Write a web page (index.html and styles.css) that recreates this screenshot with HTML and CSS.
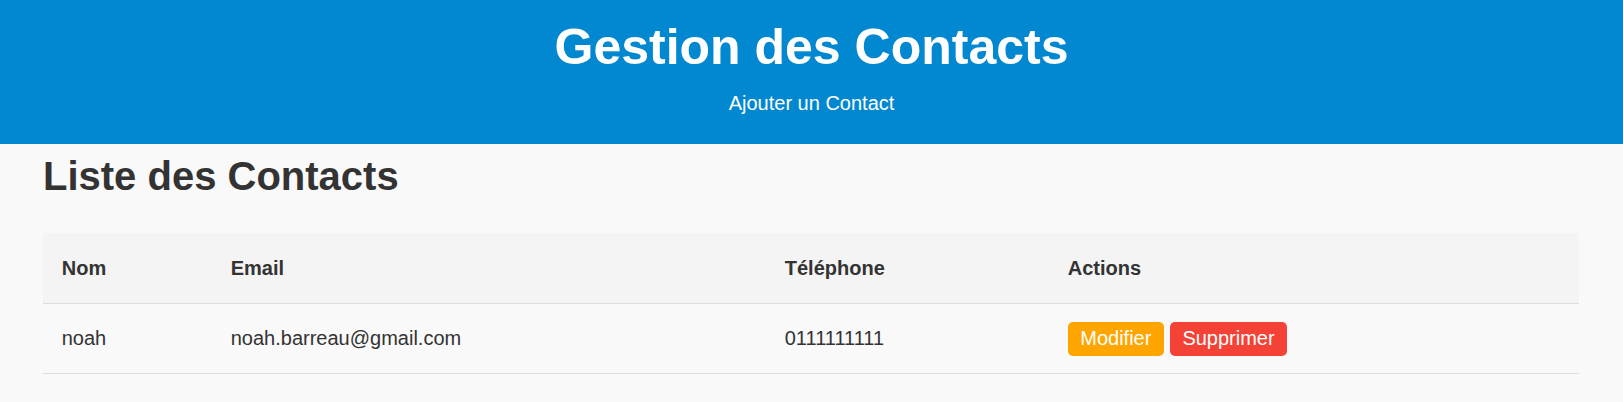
FILE: index.html
```html
<!DOCTYPE html>
<html lang="fr">
<head>
<meta charset="utf-8">
<title>Gestion des Contacts</title>
<link rel="stylesheet" href="styles.css">
</head>
<body>
<header class="site-header">
  <h1 class="site-title">Gestion des Contacts</h1>
  <nav class="site-nav"><a class="nav-link" href="#">Ajouter un Contact</a></nav>
</header>
<main class="content">
  <h2 class="section-title">Liste des Contacts</h2>
  <table class="contacts">
    <thead>
      <tr>
        <th class="col-nom">Nom</th>
        <th class="col-email">Email</th>
        <th class="col-tel">Téléphone</th>
        <th class="col-actions">Actions</th>
      </tr>
    </thead>
    <tbody>
      <tr>
        <td>noah</td>
        <td>noah.barreau@gmail.com</td>
        <td>0111111111</td>
        <td class="actions-cell">
          <div class="actions">
            <a class="btn btn-edit" href="#">Modifier</a>
            <a class="btn btn-delete" href="#">Supprimer</a>
          </div>
        </td>
      </tr>
    </tbody>
  </table>
</main>
</body>
</html>
```

FILE: styles.css
```css
* { box-sizing: border-box; }

body {
  margin: 0;
  background: #f9f9f9;
  color: #333;
  font-family: "Liberation Sans", Arial, sans-serif;
}

.site-header {
  background: #0288d1;
  color: #fff;
  text-align: center;
  padding: 17px 0 29px;
}

.site-title {
  margin: 0;
  font-size: 50px;
  line-height: 60px;
  font-weight: bold;
}

.site-nav {
  margin-top: 15px;
}

.nav-link {
  color: #fff;
  text-decoration: none;
  font-size: 20px;
  line-height: 23px;
  display: inline-block;
}

.content {
  padding: 0 44px 0 43px;
}

.section-title {
  margin: 9px 0 34px;
  font-size: 40px;
  line-height: 46px;
  font-weight: bold;
  color: #333;
}

.contacts {
  width: 100%;
  border-collapse: collapse;
  table-layout: fixed;
  font-size: 20px;
  line-height: 23px;
}

.contacts th,
.contacts td {
  text-align: left;
  vertical-align: middle;
  border-bottom: 1px solid #ddd;
  padding: 17.5px 18.75px;
}

.contacts th {
  background: #f4f4f4;
  font-weight: bold;
  padding-top: 23.5px;
  padding-bottom: 23.5px;
}

.col-nom { width: 169px; }
.col-email { width: 554px; }
.col-tel { width: 283px; }

.actions {
  display: flex;
  gap: 6px;
}

.btn {
  display: inline-block;
  color: #fff;
  text-decoration: none;
  font-size: 20px;
  line-height: 23px;
  padding: 5.5px 12.5px;
  border-radius: 5px;
}

.btn-edit { background: #ffa500; }
.btn-delete { background: #f44336; }
```
